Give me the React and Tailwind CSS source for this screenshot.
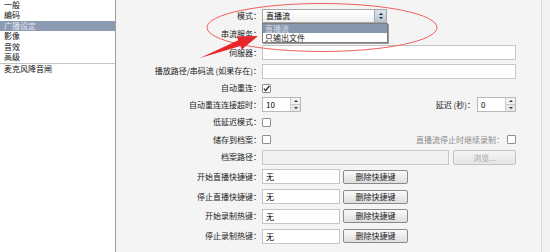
import React from 'react';

const font = "font-['Noto_Sans_CJK_SC','Noto_Sans',sans-serif]";

const navItems = ['一般', '编码', '广播设定', '影像', '音效', '高级'];

const Label = ({ children }) => (
  <div className="w-[146px] shrink-0 text-right pr-[1px] text-[8px] text-[#1b1b1b] whitespace-nowrap">{children}</div>
);

const Row = ({ h, label, children }) => (
  <div className={`flex items-center ${h}`}>
    <Label>{label}</Label>
    {children}
  </div>
);

const TextBox = ({ className = '', value = '' }) => (
  <div className={`h-[15px] border border-[#c6c6c6] bg-white text-[8px] leading-[13px] pl-[3px] ${className}`}>{value}</div>
);

const CheckBox = ({ checked }) => (
  <div className="w-[9px] h-[9px] border border-[#8d8e90] bg-white rounded-[1px] flex items-center justify-center">
    {checked && (
      <svg width="7" height="7" viewBox="0 0 7 7">
        <path d="M0.8 3.6 L2.7 5.6 L6.3 1" stroke="#222" strokeWidth="1.3" fill="none" />
      </svg>
    )}
  </div>
);

const SpinBox = ({ value }) => (
  <div className="w-[39px] h-[15px] border border-[#b8b8b8] bg-white flex">
    <div className="flex-1 text-[8px] leading-[13px] pl-[3px]">{value}</div>
    <div className="w-[10px] flex flex-col border-l border-[#d0d0d0]">
      <div className="flex-1 flex items-center justify-center bg-[#f2f2f2] border-b border-[#c8c8c8]">
        <div className="w-0 h-0 border-l-[2px] border-r-[2px] border-b-[2px] border-l-transparent border-r-transparent border-b-[#333]" />
      </div>
      <div className="flex-1 flex items-center justify-center bg-[#e8e8e8]">
        <div className="w-0 h-0 border-l-[2px] border-r-[2px] border-t-[2px] border-l-transparent border-r-transparent border-t-[#333]" />
      </div>
    </div>
  </div>
);

const DeleteButton = () => (
  <div className="ml-[3px] w-[65px] h-[14px] rounded-[2px] border border-[#8a8a8a] bg-gradient-to-b from-[#fafafa] to-[#dedede] text-[8px] leading-[12px] text-center text-[#222]">
    删除快捷键
  </div>
);

const HotkeyRow = ({ h, label }) => (
  <Row h={h} label={label}>
    <TextBox className="w-[78px] h-[14px] leading-[12px]" value="无" />
    <DeleteButton />
  </Row>
);

export default function App() {
  return (
    <div className={`relative flex w-[550px] h-[252px] overflow-hidden bg-[#f4f4f4] ${font}`}>
      {/* left nav list */}
      <div className="w-[116px] shrink-0 bg-white border-r border-[#9c9c9c] text-[8px] text-[#111]">
        {navItems.map((item) => (
          <div
            key={item}
            className={`h-[10.4px] leading-[10.4px] pl-[4px] ${item === '广播设定' ? 'bg-[#8c9bb2] text-[#e4e8ee]' : ''}`}
          >
            {item}
          </div>
        ))}
        <div className="h-px bg-[#c4c4c4] mt-[0.5px]" />
        <div className="h-[10.4px] leading-[10.4px] pl-[4px]">麦克风降音闸</div>
      </div>

      {/* settings form */}
      <div className="w-[425px] shrink-0 pt-[7px] pr-[25px]">
        <Row h="h-[18px]" label="模式：">
          <div className="relative w-[125px] h-[14px] border border-[#a7a7a7] bg-gradient-to-b from-white to-[#f0f0f0] flex">
            <div className="flex-1 text-[8px] leading-[12px] pl-[3px]">直播流</div>
            <div className="w-[12px] border-l border-[#9aa8b6] bg-gradient-to-b from-[#dbe4ec] to-[#b5c4d2] flex flex-col items-center justify-center gap-[2px]">
              <div className="w-0 h-0 border-l-[2px] border-r-[2px] border-b-[2px] border-l-transparent border-r-transparent border-b-[#222]" />
              <div className="w-0 h-0 border-l-[2px] border-r-[2px] border-t-[2px] border-l-transparent border-r-transparent border-t-[#222]" />
            </div>
            {/* open dropdown */}
            <div className="absolute left-[-1px] top-[13px] w-[126px] h-[20px] border border-[#7d7d7d] bg-white shadow-[1px_1px_0_#9a9a9a] text-[8px] z-10">
              <div className="h-[9px] leading-[9px] pl-[2px] bg-[#8797ae] text-[#d5dbe4]">直播流</div>
              <div className="h-[9px] leading-[10px] pl-[2px] text-[#111]">只输出文件</div>
            </div>
          </div>
        </Row>
        <Row h="h-[18px]" label="串流服务：" />
        <Row h="h-[19px]" label="伺服器：">
          <TextBox className="flex-1" />
        </Row>
        <Row h="h-[18px]" label="播放路径/串码流 (如果存在)：">
          <TextBox className="flex-1" />
        </Row>
        <Row h="h-[16px]" label="自动重连：">
          <CheckBox checked />
        </Row>
        <Row h="h-[17px]" label="自动重连连接超时：">
          <SpinBox value="10" />
          <div className="flex-1 text-right pr-[2px] text-[8px] text-[#1b1b1b]">延迟 (秒)：</div>
          <SpinBox value="0" />
        </Row>
        <Row h="h-[18px]" label="低延迟模式：">
          <CheckBox />
        </Row>
        <Row h="h-[17px]" label="储存到档案：">
          <CheckBox />
          <div className="flex-1 text-right pr-[3px] text-[8px] text-[#8a8a8a]">直播流停止时继续录制：</div>
          <CheckBox />
        </Row>
        <Row h="h-[18px]" label="档案路径：">
          <div className="w-[187px] h-[15px] border border-[#c8c8c8] bg-[#f1f1f1]" />
          <div className="ml-[4px] flex-1 h-[15px] rounded-[2px] border border-[#c2c2c2] bg-gradient-to-b from-[#f4f4f4] to-[#e6e6e6] text-[8px] leading-[13px] text-center text-[#a6a6a6]">
            浏览...
          </div>
        </Row>
        <HotkeyRow h="h-[21px]" label="开始直播快捷键：" />
        <HotkeyRow h="h-[19px]" label="停止直播快捷键：" />
        <HotkeyRow h="h-[20px]" label="开始录制热键：" />
        <HotkeyRow h="h-[20px]" label="停止录制热键：" />
      </div>

      <div className="flex-1 border-l border-[#d9d9d9] bg-[#f2f2f2]" />

      {/* red annotation */}
      <svg className="absolute inset-0 pointer-events-none z-20" width="550" height="252" viewBox="0 0 550 252">
        <ellipse cx="322" cy="27.5" rx="115" ry="24" fill="none" stroke="#ef5f5f" strokeWidth="1" />
        <polygon
          points="200,58 238.2,40.3 236.8,36.6 258,36 241.8,49.6 240.4,45.9"
          fill="#e8262a"
        />
      </svg>
    </div>
  );
}
